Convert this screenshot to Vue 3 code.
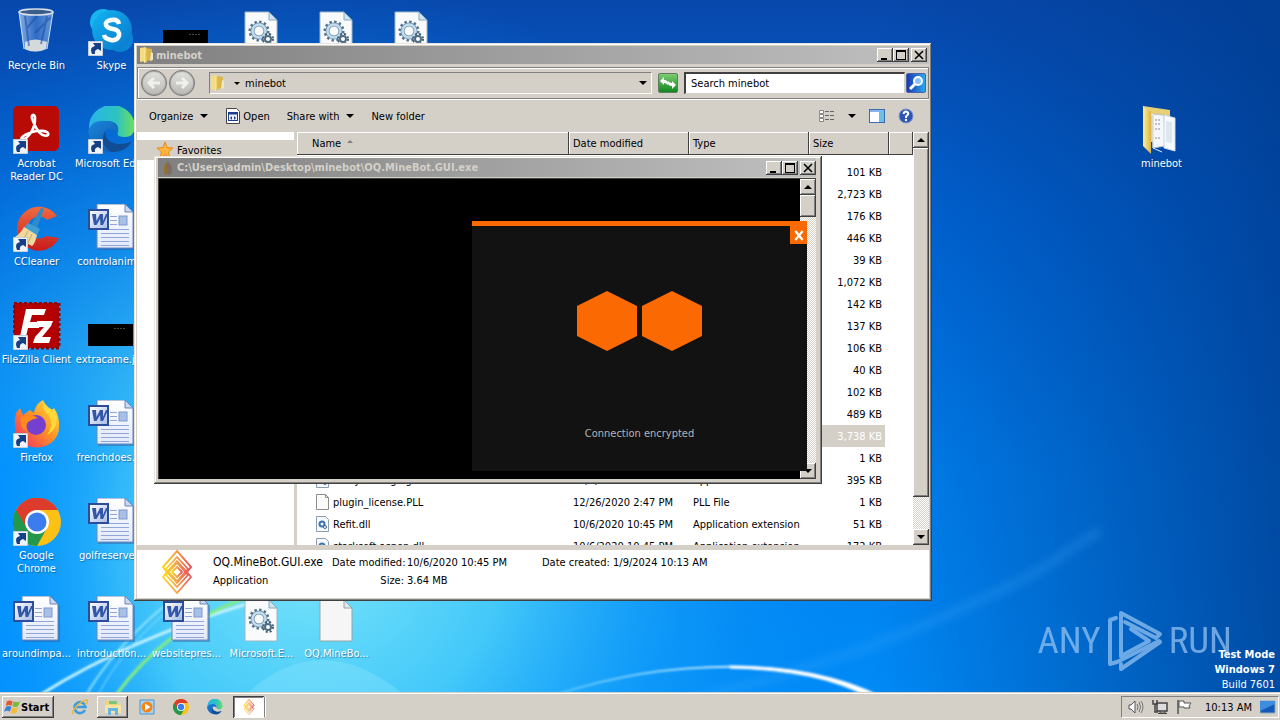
<script setup>
import { ref } from 'vue'

const search = ref('Search minebot')

const shortcuts = [
  { col: 1, row: 1, icon: 'bin', label: 'Recycle Bin' },
  { col: 1, row: 2, icon: 'acrobat', label: 'Acrobat Reader DC', link: true },
  { col: 1, row: 3, icon: 'ccleaner', label: 'CCleaner', link: true },
  { col: 1, row: 4, icon: 'filezilla', label: 'FileZilla Client', link: true },
  { col: 1, row: 5, icon: 'firefox', label: 'Firefox', link: true },
  { col: 1, row: 6, icon: 'chrome', label: 'Google Chrome', link: true },
  { col: 1, row: 7, icon: 'word', label: 'aroundimpa...' },
  { col: 2, row: 1, icon: 'skype', label: 'Skype', link: true },
  { col: 2, row: 2, icon: 'edge', label: 'Microsoft Edge', link: true },
  { col: 2, row: 3, icon: 'word', label: 'controlanim...' },
  { col: 2, row: 4, icon: 'thumb', label: 'extracame.jpg' },
  { col: 2, row: 5, icon: 'word', label: 'frenchdoes.rtf' },
  { col: 2, row: 6, icon: 'word', label: 'golfreserve...' },
  { col: 2, row: 7, icon: 'word', label: 'introduction...' },
  { col: 3, row: 1, icon: 'thumb', label: '' },
  { col: 3, row: 7, icon: 'word', label: 'websitepres...' },
  { col: 4, row: 1, icon: 'dll', label: '' },
  { col: 4, row: 7, icon: 'dll', label: 'Microsoft.E...' },
  { col: 5, row: 1, icon: 'dll', label: '' },
  { col: 5, row: 7, icon: 'page', label: 'OQ.MineBo...' },
  { col: 6, row: 1, icon: 'dll', label: '' },
  { col: 16, row: 2, icon: 'bigfolder', label: 'minebot' },
]

const hiddenSizes = ['101', '2,723', '176', '446', '39', '1,072', '142', '137', '106', '40', '102', '489', '3,738', '1']
const files = [
  ...hiddenSizes.map((s) => ({ name: '', date: '', type: '', size: s + ' KB', selected: s === '3,738' })),
  { icon: 'dll16', name: 'Netty.Packaging.dll', date: '10/6/2020 10:45 PM', type: 'Application extension', size: '395 KB' },
  { icon: 'page16', name: 'plugin_license.PLL', date: '12/26/2020 2:47 PM', type: 'PLL File', size: '1 KB' },
  { icon: 'dll16', name: 'Refit.dll', date: '10/6/2020 10:45 PM', type: 'Application extension', size: '51 KB' },
  { icon: 'dll16', name: 'starksoft.aspen.dll', date: '10/6/2020 10:45 PM', type: 'Application extension', size: '172 KB' },
]
</script>

<template>
  <div class="desktop">
    <svg class="defs" width="0" height="0" aria-hidden="true">
      <defs>
        <linearGradient id="gFold" x1="0" x2="1"><stop offset="0" stop-color="#fff0a0" /><stop offset="1" stop-color="#dcb444" /></linearGradient>
        <linearGradient id="gPage" x1="0" y1="0" x2="0" y2="1"><stop offset="0" stop-color="#fff" /><stop offset="1" stop-color="#e2e9f8" /></linearGradient>
        <linearGradient id="gW" x1="0" y1="0" x2="1" y2="1"><stop offset="0" stop-color="#fff" /><stop offset="1" stop-color="#a5bbe6" /></linearGradient>
        <linearGradient id="gBin" x1="0" x2="1"><stop offset="0" stop-color="#a9c9ec" stop-opacity=".8" /><stop offset=".5" stop-color="#3f7ad0" stop-opacity=".7" /><stop offset="1" stop-color="#8fb9ea" stop-opacity=".7" /></linearGradient>
        <linearGradient id="gSky" x1="0" x2="1" y2="1"><stop offset="0" stop-color="#12b4f0" /><stop offset="1" stop-color="#0a76cc" /></linearGradient>
        <linearGradient id="gEdge" x1="0" x2="1"><stop offset="0" stop-color="#2ab5e8" /><stop offset=".6" stop-color="#2cc3c0" /><stop offset="1" stop-color="#6fe05c" /></linearGradient>
        <linearGradient id="gEdge2" x1="0" x2="1" y2="1"><stop offset="0" stop-color="#1a86dc" /><stop offset="1" stop-color="#0c4f9c" /></linearGradient>
        <linearGradient id="gFox" x1="1" y1="0" x2="0" y2="1"><stop offset="0" stop-color="#fff04a" /><stop offset=".45" stop-color="#ff9422" /><stop offset="1" stop-color="#f0246c" /></linearGradient>
        <linearGradient id="gMine" x1="0" x2="1"><stop offset="0" stop-color="#f6d81e" /><stop offset=".5" stop-color="#f0a048" /><stop offset="1" stop-color="#e8545c" /></linearGradient>
        <linearGradient id="gCc" x1="0" y1="0" x2="0" y2="1"><stop offset="0" stop-color="#f06a40" /><stop offset="1" stop-color="#c81c1c" /></linearGradient>
      </defs>
      <symbol id="bin" viewBox="0 0 48 48">
        <path d="M6 4 11 41Q22 47 34 41L40 4Z" fill="url(#gBin)" />
        <path d="M12 34Q22 29 34 34L33 41Q22 46 12 41Z" fill="#e6e4de" opacity=".9" />
        <path d="M12 8 16 38M34 8 28 36M24 8 14 20M38 9 22 25" stroke="#1c4ea4" stroke-width="2" opacity=".55" />
        <ellipse cx="23" cy="4" rx="17" ry="3" fill="#3c5c8c" stroke="#d8e0e8" stroke-width="1.6" />
        <path d="M6 4 11 41M40 4 34 41" stroke="#c4ddf5" stroke-width="1" />
      </symbol>
      <symbol id="acrobat" viewBox="0 0 48 48">
        <rect x="0" y="0" width="46" height="45" rx="5" fill="#b90b06" />
        <path d="M9 33C14 34 23 23 22 11C21 7 17 9 20 15C24 25 29 32 35 29C37 25 26 22 12 29Q7 32 9 33Z" fill="none" stroke="#fff" stroke-width="2.6" stroke-linejoin="round" />
      </symbol>
      <symbol id="ccleaner" viewBox="0 0 48 48">
        <path d="M44 12A22 22 0 1 0 46 34L33 32A11 11 0 1 1 34 16Z" fill="url(#gCc)" />
        <path d="M28 4 31 5 24 24 18 21Z" fill="#2d8cc8" />
        <path d="M15 19 27 25 24 31 11 24Z" fill="#3f9fd4" />
        <path d="M11 23 24 31Q22 40 19 42L2 33Q8 29 11 23Z" fill="#eed9a0" />
        <path d="M10 36 15 27M15 39 19 30" stroke="#c7a664" />
      </symbol>
      <symbol id="filezilla" viewBox="0 0 48 48">
        <rect x="1" y="1" width="45" height="45" fill="#b40000" stroke="#8c0808" stroke-width="3" stroke-dasharray="3 2" />
        <path d="M13 7H33L31 13H19L17 20H28L26 26H15L12 39H6Z" fill="#fff" />
        <path d="M24 19H40L38 24 29 35H38L36 41H20L22 35 31 25H23Z" fill="#fff" />
      </symbol>
      <symbol id="firefox" viewBox="0 0 48 48">
        <path d="M3 13 7 8 10 15 17 10 21 13Q22 4 30 0 33 8 38 11L41 8Q47 17 46 27A22 20 0 0 1 2 28Q1 20 3 13Z" fill="url(#gFox)" />
        <circle cx="23" cy="25" r="10" fill="#7540cf" />
        <path d="M8 17Q19 13 25 18 19 19 15 22 12 27 15 32 10 30 8 25Z" fill="#ff8b1e" />
        <path d="M30 1Q29 10 37 17 41 25 34 35 48 27 42 10Q36 10 30 1Z" fill="#ffd83a" />
      </symbol>
      <symbol id="chrome" viewBox="0 0 48 48">
        <circle cx="24" cy="24" r="24" fill="#fbc116" />
        <path d="M3 12A24 24 0 0 0 24 48L34 30 24 24Z" fill="#23984a" />
        <path d="M3 12 14 30 24 12H45A24 24 0 0 0 3 12Z" fill="#dd3c2d" />
        <circle cx="24" cy="24" r="12" fill="#fff" /><circle cx="24" cy="24" r="9.5" fill="#3b7ded" />
      </symbol>
      <symbol id="word" viewBox="0 0 48 48">
        <path d="M10 1H38L47 10V46H10Z" fill="#31589c" opacity=".45" />
        <path d="M9 0H37L45 8V44H9Z" fill="url(#gPage)" stroke="#6c86b8" />
        <path d="M37 0V8H45Z" fill="#c8d8f4" stroke="#6c86b8" />
        <path d="M22 12.500H29M22 16.500H29M22 20.500H29M13 25.500H41M13 29.500H41M13 33.500H41M13 37.500H41M13 41.500H41" stroke="#90a6d8" />
        <rect x="31" y="12" width="8" height="9" fill="#a9c0e6" stroke="#7d98cc" />
        <rect x="1" y="6" width="19" height="19" fill="url(#gW)" stroke="#2b4d9c" stroke-width="2" />
        <path d="M4 10H8L8.500 17 12 10H15L15 17 18 10H20L15 21H12.500L12 15 8.500 21H6Z" fill="#3256a8" />
      </symbol>
      <symbol id="thumb" viewBox="0 0 48 48"><path d="M0 22H45V44H0Z" fill="#000" /><path d="M26 26.500H38" stroke="#4a4830" stroke-dasharray="2 1" /></symbol>
      <symbol id="page" viewBox="0 0 48 48"><path d="M7 4H31L39 12V45H7Z" fill="#f6f6f6" stroke="#98a4a8" /><path d="M31 4V12H39Z" fill="#dfe8ee" stroke="#98a4a8" /></symbol>
      <symbol id="dll" viewBox="0 0 48 48">
        <path d="M7 4H31L39 12V45H7Z" fill="#f8fafc" stroke="#a0b4c4" /><path d="M31 4V12H39Z" fill="#cfe4f0" stroke="#8ab" />
        <circle cx="21" cy="23" r="9" fill="none" stroke="#50718c" stroke-width="3" stroke-dasharray="2.350 2.350" />
        <circle cx="21" cy="23" r="6.500" fill="none" stroke="#6a8aa4" stroke-width="4" />
        <circle cx="21" cy="23" r="6.500" fill="none" stroke="#c0dcee" stroke-width="2.500" />
        <circle cx="30" cy="31" r="5" fill="none" stroke="#405c70" stroke-width="2" stroke-dasharray="2 2" /><circle cx="30" cy="31" r="3" fill="#fff" stroke="#506c80" stroke-width="2" />
      </symbol>
      <symbol id="page16" viewBox="0 0 16 16"><path d="M1.500.5H10.500L13.500 3.500V15.500H1.500Z" fill="#fafafa" stroke="#8c8c8c" /><path d="M10.500.5V3.500H13.500" fill="none" stroke="#8c8c8c" /></symbol>
      <symbol id="dll16" viewBox="0 0 16 16"><path d="M1.500.5H10.500L13.500 3.500V15.500H1.500Z" fill="#f4faff" stroke="#8c9cac" /><circle cx="7" cy="8" r="2.500" fill="none" stroke="#3c74a8" stroke-width="2" /><circle cx="10" cy="11" r="1.500" fill="#fff" stroke="#3c6484" /></symbol>
      <symbol id="skype" viewBox="0 0 48 48">
        <circle cx="15" cy="14" r="13" fill="#18b5ee" /><circle cx="32" cy="31" r="13" fill="#0a84d4" /><circle cx="24" cy="22" r="20" fill="url(#gSky)" />
        <path d="M31 16Q30 11 23 12 17 13 18 17 19 20 25 21 32 22 31 28 29 33 23 32 17 31 16 27" fill="none" stroke="#fff" stroke-width="4.500" />
      </symbol>
      <symbol id="edge" viewBox="0 0 48 48">
        <path d="M1 21A23 22 0 0 1 47 21Q46 32 35 31 28 30 30 26 32 16 20 15 6 14 1 25Z" fill="url(#gEdge)" />
        <path d="M0 26Q3 13 19 15 31 16 29 26 20 19 16 27 15 41 36 39 43 37 44 35 37 47 22 46 4 44 0 26Z" fill="url(#gEdge2)" />
        <path d="M17 25Q17 36 30 38 40 38 44 35 37 47 24 46 10 38 17 25Z" fill="#124c94" />
      </symbol>
      <symbol id="bigfolder" viewBox="0 0 48 48">
        <path d="M5 0 32 4V36L5 36Z" fill="#e8cf74" />
        <path d="M15 8 26 9 27 40 15 42Z" fill="#f5f8fa" stroke="#b8c0c4" /><path d="M17 14H23M17 18H23M17 23H23M17 32H22" stroke="#889" stroke-dasharray="2 1" />
        <path d="M26 9 37 12V45L26 42Z" fill="#f7fbff" stroke="#c7d6e4" /><path d="M28 15 34 16V37L28 36Z" fill="#dce7f0" />
        <path d="M5 0 13 6V48L5 40Z" fill="url(#gFold)" />
        <path d="M13 9 15 8V42L24 46" fill="none" stroke="#e4edf4" />
      </symbol>
      <symbol id="folder" viewBox="0 0 16 16"><path d="M1 1 7 0V14L1 15Z" fill="#f3dc82" /><path d="M7 1 13 2V13L7 14Z" fill="#d9b64c" /><path d="M5 3 8 2V15L5 16Z" fill="url(#gFold)" /><path d="M12 5 14 6V13L11 14Z" fill="#eee6c0" /></symbol>
      <symbol id="mine" viewBox="0 0 32 44">
        <g fill="none" stroke="url(#gMine)" stroke-width="1.800" stroke-linejoin="round"><path d="M16 1 30 17 26 22 16 11 6 22 2 17Z" /><path d="M16 43 30 27 26 22 16 33 6 22 2 27Z" /><path d="M6 22 2 17 16 1 30 17 26 22" /><path d="M16 7 27 19 16 31 5 19Z" /><path d="M16 13 27 25 16 37 5 25Z" /><path d="M16 17 21 22 16 27 11 22Z" /></g>
      </symbol>
      <symbol id="arrow" viewBox="0 0 15 15"><rect width="15" height="15" fill="#eef4fa" stroke="#9ab" /><path d="M4 13Q1 6 7 5L5 2H13V10L10 8Q6 9 7 13Z" fill="#173f85" /></symbol>
    </svg>

    <svg class="wallpaper" viewBox="0 0 1280 720" preserveAspectRatio="none" aria-hidden="true">
      <defs>
        <linearGradient id="sky" x1="0" y1="0" x2="0" y2="1"><stop offset="0" stop-color="#0848ac" /><stop offset=".3" stop-color="#0064d4" /><stop offset=".65" stop-color="#0080ee" /><stop offset="1" stop-color="#008cf8" /></linearGradient>
        <radialGradient id="glow" gradientUnits="userSpaceOnUse" cx="310" cy="540" r="560"><stop offset="0" stop-color="#80e8fa" /><stop offset=".35" stop-color="#50d4fa" stop-opacity=".85" /><stop offset=".65" stop-color="#1ca8fc" stop-opacity=".5" /><stop offset="1" stop-color="#0084f4" stop-opacity="0" /></radialGradient>
        <linearGradient id="shade" x1="0" x2="1"><stop offset=".68" stop-color="#003c94" stop-opacity="0" /><stop offset="1" stop-color="#003c90" stop-opacity=".8" /></linearGradient>
        <linearGradient id="left" x1="0" x2="1"><stop offset="0" stop-color="#0090ff" stop-opacity=".85" /><stop offset=".14" stop-color="#0090ff" stop-opacity="0" /></linearGradient>
        <linearGradient id="fade" x1="0" y1="0" x2="0" y2="1"><stop offset="0" stop-color="#000" /><stop offset=".3" stop-color="#fff" /></linearGradient>
        <mask id="fadeMask"><rect y="350" width="1280" height="370" fill="url(#fade)" /></mask>
        <linearGradient id="arc" gradientUnits="userSpaceOnUse" x1="560" x2="740" y1="0" y2="0"><stop offset="0" stop-color="#8cdcff" stop-opacity=".5" /><stop offset="1" stop-color="#d0f0ff" /></linearGradient>
        <filter id="soft"><feGaussianBlur stdDeviation="1" /></filter>
        <filter id="softer"><feGaussianBlur stdDeviation="5" /></filter>
      </defs>
      <rect width="1280" height="720" fill="url(#sky)" /><rect width="1280" height="720" fill="url(#glow)" />
      <rect y="350" width="1280" height="370" fill="url(#left)" mask="url(#fadeMask)" /><rect width="1280" height="720" fill="url(#shade)" />
      <path d="M690 700Q880 655 1040 570L1100 530" fill="none" stroke="#50b4ff" stroke-width="8" opacity=".25" filter="url(#softer)" />
      <path d="M240 700Q320 620 410 700Z" fill="#a8f0ff" opacity=".25" />
      <g fill="none" filter="url(#soft)">
        <path d="M40 695Q130 638 260 600" stroke="#c8f4ff" stroke-width="3" /><path d="M86 695Q118 642 172 600" stroke="#90e4ff" stroke-width="2" /><path d="M98 695Q124 645 178 602" stroke="#90e4ff" stroke-width="1" />
        <path d="M116 695Q165 628 245 598" stroke="#86ec80" stroke-width="3" />
        <path d="M558 694Q650 664 750 667" stroke="url(#arc)" stroke-width="2" />
        <path d="M730 666Q820 666 882 697L868 697Q820 670 730 668Z" fill="#fff" stroke="#fff" stroke-width="1" />
      </g>
    </svg>

    <main class="icons">
      <button v-for="s in shortcuts" :key="s.col + '-' + s.row" class="shortcut" :style="{ gridColumn: s.col, gridRow: s.row }" :aria-label="s.label || 'File'">
        <span class="pic"><svg><use :href="'#' + s.icon" /></svg><svg v-if="s.link" class="link"><use href="#arrow" /></svg></span>
        <span>{{ s.label }}</span>
      </button>
    </main>

    <section class="window explorer" aria-label="minebot">
      <header class="titlebar">
        <svg class="i16"><use href="#folder" /></svg><h1>minebot</h1>
        <div class="controls">
          <button aria-label="Minimize"><svg viewBox="0 0 10 10"><path d="M1 8H7V10H1Z" /></svg></button>
          <button aria-label="Maximize"><svg viewBox="0 0 10 10"><path d="M0 0H10V10H0ZM1 2V9H9V2Z" fill-rule="evenodd" /></svg></button>
          <button class="gap" aria-label="Close"><svg viewBox="0 0 10 10"><path d="M1 1 9 9M9 1 1 9" stroke="#000" stroke-width="1.600" /></svg></button>
        </div>
      </header>
      <nav class="address">
        <button class="round" aria-label="Back"><svg viewBox="0 0 24 24"><path d="M18 12H7M12 7 7 12 12 17" /></svg></button>
        <button class="round" aria-label="Forward"><svg viewBox="0 0 24 24"><path d="M6 12H17M12 7 17 12 12 17" /></svg></button>
        <div class="path"><svg class="i16"><use href="#folder" /></svg><span class="tri small"></span><span>minebot</span><span class="tri end"></span></div>
        <button class="go" aria-label="Refresh"><svg viewBox="0 0 18 18"><path d="M1 7 5 3V6Q9 6 9 9V11Q7 9 5 9V11ZM17 11 13 15V12Q9 12 9 9V7Q11 9 13 9V7Z" transform="rotate(0)" fill="#fff" /></svg></button>
        <input v-model="search" aria-label="Search minebot" />
        <button class="find" aria-label="Search"><svg viewBox="0 0 18 18"><circle cx="11" cy="7" r="4" fill="#85c4ff" stroke="#fff" stroke-width="2" /><path d="M8 10 3 15" stroke="#fff" stroke-width="3" /></svg></button>
      </nav>
      <div class="toolbar">
        <button>Organize<span class="tri"></span></button>
        <button class="open"><svg class="i16" viewBox="0 0 16 16"><path d="M1.500.5H11.500L14.500 3.500V15.500H1.500Z" fill="#fff" stroke="#444" /><rect x="3.500" y="4.500" width="9" height="8" fill="#eef" stroke="#1c3c94" /><path d="M3 5.500H13" stroke="#1c3c94" stroke-width="2" /><path d="M5 10 7 8V12ZM11 10 9 8V12Z" fill="#1c3c94" /></svg>Open</button>
        <button>Share with<span class="tri"></span></button>
        <button>New folder</button>
        <div class="tools">
          <button aria-label="View"><svg class="i16" viewBox="0 0 16 16"><path d="M.5 2.500H4.500V5.500H.5ZM.5 6.500H4.500V9.500H.5ZM.5 10.500H4.500V13.500H.5Z" fill="#fff" stroke="#888" /><path d="M6 3.500H16M6 7.500H16M6 11.500H16" stroke="#666" stroke-dasharray="4 1" /></svg><span class="tri"></span></button>
          <button aria-label="Preview pane"><svg class="i16" viewBox="0 0 16 16"><rect x=".5" y="1.500" width="15" height="13" fill="#fff" stroke="#3a6ab0" /><path d="M1 3H15" stroke="#8ab4e8" stroke-width="2" /><path d="M10 3H15V14H10Z" fill="#6cc0e4" /></svg></button>
          <button aria-label="Help"><svg class="i16" viewBox="0 0 16 16"><circle cx="8" cy="8" r="7" fill="#2c54b8" stroke="#8096c4" /><path d="M5.500 6Q6 3.500 8 3.500 10.500 4 10.200 6 9.500 7.500 8 8.500V10" fill="none" stroke="#fff" stroke-width="2" /><circle cx="8" cy="12" r="1.200" fill="#fff" /></svg></button>
        </div>
      </div>
      <div class="content">
        <aside><a href="#favorites"><svg class="i16" viewBox="0 0 16 16"><path d="M8 0 10 5.500 16 6 11.500 10 13 16 8 12.500 3 16 4.500 10 0 6 6 5.500Z" fill="#ffb43c" stroke="#e88a1c" /></svg>Favorites</a></aside>
        <div class="list">
          <table>
            <colgroup><col class="c-name" /><col class="c-mid" /><col class="c-mid" /><col class="c-size" /><col /></colgroup>
            <thead><tr><th class="first">Name <i class="sort"></i></th><th>Date modified</th><th>Type</th><th>Size</th><th></th></tr></thead>
            <tbody>
              <tr v-for="(f, i) in files" :key="i" :class="{ selected: f.selected }">
                <td><span class="file"><svg v-if="f.icon" class="i16"><use :href="'#' + f.icon" /></svg>{{ f.name }}</span></td>
                <td>{{ f.date }}</td><td>{{ f.type }}</td><td class="size">{{ f.size }}</td><td class="blank"></td>
              </tr>
            </tbody>
          </table>
        </div>
        <div class="scroll main"><button aria-label="Scroll up"><span class="tri up"></span></button><div class="thumb"></div><button class="down" aria-label="Scroll down"><span class="tri"></span></button></div>
      </div>
      <footer class="details">
        <svg><use href="#mine" /></svg>
        <div class="facts">
          <span class="big">OQ.MineBot.GUI.exe</span><span class="key">Date modified:</span><span>10/6/2020 10:45 PM</span><span>Date created:</span><span>1/9/2024 10:13 AM</span>
          <span>Application</span><span class="key">Size:</span><span>3.64 MB</span>
        </div>
      </footer>
    </section>

    <section class="window console" aria-label="Console">
      <header class="titlebar">
        <svg class="i16" viewBox="0 0 16 16"><path d="M8 1Q2 6 5 15 7 15 8 14Z" fill="#92702c" /><path d="M8 1Q14 7 11 14L8 15Z" fill="#7c6c68" /></svg>
        <h2>C:\Users\admin\Desktop\minebot\OQ.MineBot.GUI.exe</h2>
        <div class="controls">
          <button aria-label="Minimize"><svg viewBox="0 0 10 10"><path d="M1 8H7V10H1Z" /></svg></button>
          <button aria-label="Maximize"><svg viewBox="0 0 10 10"><path d="M0 0H10V10H0ZM1 2V9H9V2Z" fill-rule="evenodd" /></svg></button>
          <button class="gap" aria-label="Close"><svg viewBox="0 0 10 10"><path d="M1 1 9 9M9 1 1 9" stroke="#000" stroke-width="1.600" /></svg></button>
        </div>
      </header>
      <div class="term"><div class="black"></div><div class="scroll"><button aria-label="Scroll up"><span class="tri up"></span></button><div class="thumb"></div><button class="down" aria-label="Scroll down"><span class="tri"></span></button></div></div>
    </section>

    <section class="splash" aria-label="Loading">
      <button aria-label="Close"><svg viewBox="0 0 10 12"><path d="M1 1 9 11M9 1 1 11" stroke="#fff" stroke-width="2.500" /></svg></button>
      <div class="hexes"><i></i><i></i></div>
      <p>Connection encrypted</p>
    </section>

    <div class="brand">
      <span>ANY</span>
      <svg viewBox="0 0 56 62"><g fill="none" stroke="#9cc8f4" stroke-width="4" stroke-linejoin="round" stroke-linecap="round"><path d="M9 8 3 10V54L10 52 52 31" /><path d="M14 46V3L53 24 49 28 18 12" /><path d="M14 46 42 31 24 19" /><path d="M53 32 14 59V54" /></g></svg>
      <span>RUN</span>
    </div>
    <div class="mode"><b>Test Mode</b><b>Windows 7</b><span>Build 7601</span></div>

    <footer class="taskbar">
      <button class="start"><svg viewBox="0 0 18 16"><path d="M3 2Q6 0 9 2L8 7Q5 5 2 7Z" fill="#e8562c" /><path d="M10 2Q13 4 17 2L15 7Q12 9 9 7Z" fill="#7ab83c" /><path d="M2 8Q5 6 8 8L6 13Q4 11 0 13Z" fill="#3c80d8" /><path d="M9 8Q12 10 15 8L13 14Q10 16 7 14Z" fill="#f4bc30" /></svg>Start</button>
      <button class="task" aria-label="Internet Explorer"><svg viewBox="0 0 16 16"><path d="M13 11A5.500 5.500 0 1 1 13.500 8H4" fill="none" stroke="#3c9ce0" stroke-width="2.600" /><path d="M2 14Q-2 16 3 9 10 1 15 1 17 2 13 6" fill="none" stroke="#e8b83c" stroke-width="1.300" /></svg></button>
      <button class="task raised" aria-label="Explorer"><svg viewBox="0 0 16 16"><path d="M1 2H7L8 4H15V13H1Z" fill="#f0d478" /><path d="M4 2H12V5H4Z" fill="#7cc47c" /><path d="M0 6H16V14H0Z" fill="#f6e4a0" /><path d="M3 16V9H13V16H10V12H6V16Z" fill="#68b4e4" /></svg></button>
      <button class="task" aria-label="Media Player"><svg viewBox="0 0 16 16"><path d="M1 1H15V15H1Z" fill="#a8d4f4" stroke="#4c94cc" /><circle cx="8" cy="8" r="5.500" fill="#f48418" /><path d="M6 4.500 11.500 8 6 11.500Z" fill="#fff" /></svg></button>
      <button class="task" aria-label="Chrome"><svg><use href="#chrome" /></svg></button>
      <button class="task" aria-label="Edge"><svg><use href="#edge" /></svg></button>
      <button class="task active" aria-label="OQ.MineBot"><svg><use href="#mine" /></svg></button>
      <i class="grip"></i>
      <div class="tray">
        <svg viewBox="0 0 16 16"><path d="M1 6H3L7 2V14L3 10H1Z" fill="#fff" stroke="#555" /><path d="M9 5Q11 8 9 11M11 3Q14 8 11 13M13 2Q17 8 13 14" fill="none" stroke="#777" /></svg>
        <svg viewBox="0 0 16 16"><path d="M5 4H15V12H5Z" fill="#ddd" stroke="#444" stroke-width="1.500" /><path d="M8 12V14H13V12M6 14.500H15" stroke="#444" fill="none" /><path d="M1 1V5H5V1M3 5V13H6" fill="none" stroke="#444" stroke-width="1.500" /></svg>
        <svg viewBox="0 0 16 16"><path d="M2 1V15" stroke="#555" stroke-width="1.500" /><path d="M3 2H8V4H15L13 7 14 9H8V8H3Z" fill="#fff" stroke="#555" /></svg>
        <time>10:13 AM</time>
        <svg viewBox="0 0 16 16"><path d="M0 2H15V14H0Z" fill="#1458b8" stroke="#8ab" /><path d="M0 12 15 5V2H0Z" fill="#3c8ce0" /></svg>
      </div>
    </footer>
  </div>
</template>

<style>
html, body { margin: 0; overflow: hidden; }
</style>

<style scoped>
.desktop { position: relative; height: 100vh; overflow: hidden; font: 11px/13px "DejaVu Sans Condensed", "DejaVu Sans", sans-serif; color: #000; }
button { font: inherit; color: inherit; border: 0; padding: 0; background: none; }
h1, h2, p { margin: 0; font-size: inherit; }
svg { display: block; }
.defs, .wallpaper { position: absolute; }
.wallpaper { inset: 0; width: 100%; height: 100%; }
.i16 { width: 16px; height: 16px; flex: none; }

.icons { position: relative; display: grid; grid-template-columns: repeat(17, 75px); grid-auto-rows: 98px; margin-left: -1px; padding-top: 8px; }
.shortcut { display: flex; flex-direction: column; align-items: center; gap: 3px; color: #fff; text-shadow: 1px 1px 1px #00306080; }
.shortcut > span:last-child { max-width: 80px; white-space: nowrap; }
.shortcut:nth-child(2) > span:last-child, .shortcut:nth-child(6) > span:last-child { width: 62px; white-space: normal; }
.pic { position: relative; }
.pic svg { width: 48px; height: 48px; }
.pic .link { position: absolute; left: 0; bottom: 0; width: 15px; height: 15px; }

.window { position: absolute; box-sizing: border-box; display: flex; flex-direction: column; padding: 3px; background: #d4d0c8; box-shadow: inset -1px -1px #404040, inset 1px 1px #e8e4dc, inset -2px -2px #808080, inset 2px 2px #fff; }
.explorer { left: 134px; top: 43px; width: 798px; height: 558px; }
.console { left: 154px; top: 156px; width: 668px; height: 328px; padding: 2px 6px 5px 4px; }
.titlebar { flex: none; display: flex; align-items: center; height: 18px; gap: 1px; padding: 0 2px; background: linear-gradient(90deg, #808080, #c0c0c0); color: #d4d0c8; font-weight: bold; white-space: nowrap; }
.console .titlebar { height: 19px; padding: 0 0 0 2px; }
.controls { display: flex; margin-left: auto; }
.controls button { display: grid; place-items: center; width: 16px; height: 14px; }
.controls svg { width: 10px; height: 10px; }
.controls .gap { margin-left: 2px; }
.controls button, .scroll button, .thumb, .start, .raised { background: #d4d0c8; box-shadow: inset -1px -1px #404040, inset 1px 1px #fff, inset -2px -2px #808080; }
.tri { display: inline-block; border: 4px solid transparent; border-top-color: #000; border-bottom: 0; }
.tri.up { border-top: 0; border-bottom: 4px solid #000; }
.tri.small { border-width: 3px 3px 0; }

.address { flex: none; display: flex; align-items: center; height: 32px; box-sizing: border-box; margin-top: 3px; padding: 0 2px; border: 1px solid #808080; box-shadow: inset 1px 1px #fff, 0 1px #fff; }
.round { width: 26px; height: 26px; margin: 0 1px; border: 1px solid #747474; border-radius: 50%; background: linear-gradient(#e0e0de, #bcbab6); box-shadow: inset 0 0 1px 1px #a8a6a2; }
.round svg { fill: none; stroke: #f0f0ee; stroke-width: 3; }
.path { flex: 1; display: flex; align-items: center; gap: 5px; height: 20px; margin: 0 6px 0 13px; border: 1px solid; border-color: #808080 #fff #fff #808080; }
.path .small { margin-left: 3px; }
.path .end { margin-left: auto; margin-right: 4px; }
.go, .find { width: 20px; height: 20px; border: 1px solid #607c60; border-radius: 2px; }
.go { background: linear-gradient(#7ccc70, #108820); }
.find { background: linear-gradient(90deg, #1c38b4, #28a8ec); border-color: #4c64a4; }
input { box-sizing: border-box; width: 221px; height: 22px; margin: 0 1px 0 6px; padding: 0 5px; border: 1px solid #d4d0c8; border-left: 2px solid #404040; border-top: 2px solid #404040; background: #fff; font: inherit; color: #000; }

.toolbar { flex: none; display: flex; align-items: center; gap: 17px; height: 34px; margin-bottom: -1px; padding: 0 15px 0 12px; }
.toolbar button { display: flex; align-items: center; gap: 7px; white-space: nowrap; }
.toolbar .open { gap: 2px; }
.tools { display: flex; align-items: center; gap: 13px; margin-left: auto; }
.tools button:first-child { gap: 13px; }

.content { flex: 1; min-height: 0; display: flex; overflow: hidden; background: #fff; }
aside { flex: none; box-sizing: border-box; width: 160px; padding-top: 8px; border-right: 3px solid #d4d0c8; }
aside a { display: flex; align-items: center; gap: 4px; height: 20px; padding-left: 20px; background: #d4d0c8; color: #000; text-decoration: none; }
.list { flex: 1; min-width: 0; overflow: hidden; }
table { width: 100%; table-layout: fixed; border-spacing: 0; white-space: nowrap; }
.c-name { width: 272px; } .c-mid { width: 120px; } .c-size { width: 80px; }
th { height: 23px; padding: 0 0 0 4px; box-sizing: border-box; text-align: left; font-weight: normal; background: #d4d0c8; box-shadow: inset -1px -1px #404040, inset 1px 1px #fff; }
th.first { padding-left: 15px; }
.sort { display: inline-block; margin: 0 0 4px 3px; border: 3px solid transparent; border-top: 0; border-bottom-color: #808080; }
tbody::before { content: ""; display: block; height: 6px; }
td { height: 22px; padding: 0 0 0 4px; }
td:first-child { padding-left: 18px; }
.file { display: flex; align-items: center; gap: 2px; }
.size { padding-right: 3px; border-right: 4px solid #fff; text-align: right; }
.selected td:not(.blank) { background: #d4d0c8; color: #fff; }

.scroll { flex: none; display: flex; flex-direction: column; width: 16px; background: conic-gradient(#fff 25%, #d4d0c8 0 50%, #fff 0 75%, #d4d0c8 0) 0 0 / 2px 2px; }
.scroll button { flex: none; display: grid; place-items: center; height: 16px; }
.scroll .down { margin-top: auto; }
.thumb { height: 22px; }
.main .thumb { height: 84.5%; }

.details { flex: none; display: flex; align-items: flex-start; height: 48px; padding-left: 24px; border-top: 5px solid #d4d0c8; background: #fff; }
.details svg { width: 32px; height: 44px; }
.facts { display: grid; grid-template-columns: 116px 72px 132px 68px auto; column-gap: 3px; grid-auto-rows: 18px; padding: 3px 0 0 20px; align-items: center; white-space: nowrap; }
.big { font-size: 12px; }
.key { text-align: right; }

.term { flex: 1; display: flex; margin-top: 1px; border: 1px solid #404040; border-width: 1px 0 0 1px; }
.black { flex: 1; background: #000; }

.splash { position: absolute; left: 472px; top: 221px; width: 335px; height: 250px; box-sizing: border-box; border-top: 5px solid #fb6a02; background: #121212; display: flex; flex-direction: column; align-items: center; }
.splash button { align-self: flex-end; display: grid; place-items: center; width: 17px; height: 18px; background: #fb6a02; }
.splash button svg { width: 10px; height: 11px; }
.hexes { display: flex; gap: 5px; margin-top: 47px; }
.hexes i { width: 60px; height: 60px; background: #fb6a02; clip-path: polygon(50% 0, 100% 25%, 100% 75%, 50% 100%, 0 75%, 0 25%); }
.splash p { margin-top: 76px; color: #b4b4b4; }

.brand { position: absolute; right: 48px; bottom: 48px; display: flex; align-items: center; gap: 6px; opacity: .7; color: #9cc8f4; font: 400 37px/62px "Liberation Sans Narrow", "Roboto Condensed", Roboto, sans-serif; }
.brand svg { width: 56px; height: 62px; }
.mode { position: absolute; right: 5px; bottom: 28px; display: flex; flex-direction: column; align-items: flex-end; line-height: 15px; color: #fff; }

.taskbar { position: absolute; left: 0; right: 0; bottom: 0; display: flex; align-items: center; height: 26px; padding: 0 1px 0 2px; border-top: 1px solid #fff; box-shadow: 0 -1px #d4d0c8; background: #d4d0c8; }
.start { display: flex; align-items: center; width: 52px; height: 22px; padding-left: 2px; font-weight: bold; }
.start svg { width: 17px; height: 16px; }
.task { display: grid; place-items: center; width: 31px; height: 22px; margin-right: 3px; }
.task svg { width: 16px; height: 16px; }
.start + .task { margin-left: 10px; margin-right: 2px; }
.active { background: #fff; box-shadow: inset 1px 1px #404040, inset -1px -1px #fff, inset 2px 2px #808080; margin: 0; }
.grip { height: 20px; border-left: 1px solid #808080; border-right: 1px solid #fff; }
.tray { display: flex; align-items: center; gap: 8px; height: 20px; margin-left: auto; padding: 0 2px 0 6px; border: 1px solid; border-color: #808080 #fff #fff #808080; }
.tray svg { width: 16px; height: 16px; }
.tray time { margin-left: 5px; }
</style>
